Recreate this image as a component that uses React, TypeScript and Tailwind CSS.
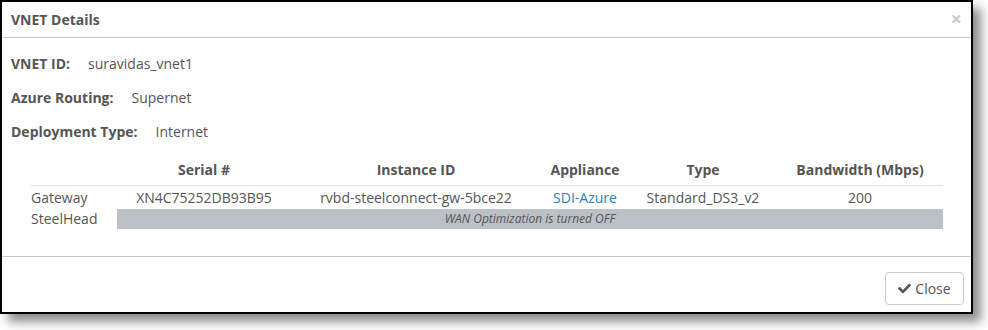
import React from "react";
import { FaCheck } from "react-icons/fa";

const font = { fontFamily: '"Open Sans", "Liberation Sans", sans-serif' };

export default function App() {
  return (
    <div className="w-[988px] h-[330px] bg-white" style={font}>
      <div className="w-[973px] h-[314px] border-2 border-black bg-white flex flex-col shadow-[8px_8px_10px_rgba(0,0,0,0.45)] text-[#555] text-[14px]">
        <div className="h-[36px] shrink-0 border-b border-[#c3c7ce] flex items-center justify-between pl-[9px] pr-[9px]">
          <span className="font-bold text-[14px]">VNET Details</span>
          <span className="text-[#c8c8c8] text-[20px] font-bold leading-none -mt-[2px]">×</span>
        </div>
        <div className="flex-1 pt-[8px] pl-[9px]">
          <div className="h-[34px] flex items-center">
            <span className="font-bold">VNET ID:</span>
            <span className="ml-[18px]">suravidas_vnet1</span>
          </div>
          <div className="h-[34px] flex items-center">
            <span className="font-bold">Azure Routing:</span>
            <span className="ml-[18px]">Supernet</span>
          </div>
          <div className="h-[34px] flex items-center">
            <span className="font-bold">Deployment Type:</span>
            <span className="ml-[18px]">Internet</span>
          </div>
          <div className="ml-[20px] w-[912px]">
            <div className="grid grid-cols-[86px_174px_250px_88px_148px_166px] font-bold pt-[12px] pb-[5px] leading-[20px] border-b border-[#e0e0e0]">
              <div></div>
              <div className="text-center">Serial #</div>
              <div className="text-center">Instance ID</div>
              <div className="text-center">Appliance</div>
              <div className="text-center">Type</div>
              <div className="text-center">Bandwidth (Mbps)</div>
            </div>
            <div className="grid grid-cols-[86px_174px_250px_88px_148px_166px] h-[23px] items-center leading-[20px]">
              <div>Gateway</div>
              <div className="text-center">XN4C75252DB93B95</div>
              <div className="text-center">rvbd-steelconnect-gw-5bce22</div>
              <div className="text-center text-[#2a80c0]">SDI-Azure</div>
              <div className="text-center">Standard_DS3_v2</div>
              <div className="text-center">200</div>
            </div>
            <div className="grid grid-cols-[86px_826px] h-[20px] items-center">
              <div className="leading-[20px]">SteelHead</div>
              <div className="h-[20px] bg-[#bcc1c8] flex items-center justify-center italic text-[12px] text-[#555]">
                WAN Optimization is turned OFF
              </div>
            </div>
          </div>
        </div>
        <div className="h-[56px] shrink-0 border-t border-[#c3c7ce] flex justify-end items-start pt-[15px] pr-[7px]">
          <button className="w-[79px] h-[33px] border border-[#ccc] rounded-[4px] bg-white flex items-center justify-center gap-[4px] text-[14px] text-[#555]">
            <FaCheck className="w-[13px] h-[13px]" />
            <span>Close</span>
          </button>
        </div>
      </div>
    </div>
  );
}
